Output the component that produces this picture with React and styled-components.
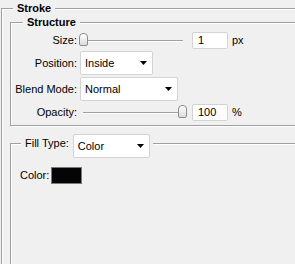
import React from "react";
import styled, { createGlobalStyle } from "styled-components";

const GlobalStyle = createGlobalStyle`
  html, body { margin: 0; padding: 0; background: #f0f0f0; }
  body {
    width: 295px; height: 264px; overflow: hidden;
    font-family: "Liberation Sans", Arial, sans-serif;
    font-size: 11px; color: #000;
  }
`;

const Panel = styled.div`
  box-sizing: border-box;
  width: 295px;
  height: 264px;
  overflow: hidden;
  padding: 2px 0 0 1px;
`;

const Group = styled.fieldset`
  margin: ${(p) => p.$margin || "0"};
  min-width: 0;
  border: 1px solid #a0a0a0;
  box-shadow: inset 1px 1px 0 #fff, 1px 1px 0 #fff;
  padding: ${(p) => p.$pad};
  width: ${(p) => p.$width || "auto"};
  min-height: ${(p) => p.$minH || "0"};
  box-sizing: border-box;
`;

const Legend = styled.legend`
  margin-left: ${(p) => p.$ml}px;
  padding: ${(p) => p.$pad || "0 4px"};
  background: #f0f0f0;
  font-weight: ${(p) => (p.$bold ? "bold" : "normal")};
  line-height: 13px;
`;

const LegendInner = styled.span`
  display: flex;
  align-items: flex-start;
  gap: 4px;
`;

const LegendLabel = styled.span`
  margin-top: 9px;
  line-height: 13px;
`;

const Form = styled.div`
  display: grid;
  grid-template-columns: 66px 1fr;
  grid-template-rows: 18px 24px 24px 18px;
  column-gap: 3px;
  row-gap: 2px;
`;

const Label = styled.div`
  display: flex;
  align-items: center;
  justify-content: flex-end;
  white-space: nowrap;
`;

const Controls = styled.div`
  display: flex;
  align-items: center;
  gap: 4px;
`;

const Slider = styled.div`
  position: relative;
  flex: none;
  width: 108px;
  height: 18px;
  margin-left: -1px;
`;

const Track = styled.div`
  position: absolute;
  left: 4px;
  right: 4px;
  top: 9px;
  height: 1px;
  background: #a0a0a0;
  box-shadow: 0 1px 0 #fff;
`;

const Thumb = styled.div`
  position: absolute;
  top: 2px;
  width: 9px;
  height: 13px;
  box-sizing: border-box;
  border: 1px solid #8c8c8c;
  border-radius: 4px 4px 2px 2px;
  background: linear-gradient(#ffffff, #dcdcdc);
`;

const NumInput = styled.div`
  box-sizing: border-box;
  width: 36px;
  height: 17px;
  margin-left: 1px;
  padding-left: 5px;
  display: flex;
  align-items: center;
  background: #fff;
  border: 1px solid #d3d3d3;
  border-radius: 2px;
`;

const Unit = styled.span``;

const Dropdown = styled.div`
  box-sizing: border-box;
  width: ${(p) => p.$w}px;
  height: 24px;
  margin-top: ${(p) => p.$mt || 0}px;
  display: flex;
  align-items: center;
  justify-content: space-between;
  padding: 0 5px 0 4px;
  background: #fff;
  border: 1px solid #d3d3d3;
  border-radius: 2px;
  font-weight: normal;
`;

const ColorRow = styled.div`
  display: flex;
  align-items: center;
  gap: 2px;
  height: 18px;
`;

const Swatch = styled.div`
  box-sizing: border-box;
  width: 31px;
  height: 17px;
  background: #050505;
  border: 1px solid #7a7a7a;
`;

const Arrow = () => (
  <svg width="7" height="4" viewBox="0 0 7 4">
    <polygon points="0,0 7,0 3.5,4" fill="#000" />
  </svg>
);

const SLIDER_RANGE = 99;

const SliderCtl = ({ value, min, max }) => (
  <Slider>
    <Track />
    <Thumb style={{ left: ((value - min) / (max - min)) * SLIDER_RANGE }} />
  </Slider>
);

export default function App() {
  return (
    <>
      <GlobalStyle />
      <Panel>
        <Group $width="360px" $minH="300px" $pad="1px 0 0 8px">
          <Legend $bold $ml={3}>Stroke</Legend>
          <Group $pad="2px 0 4px 0">
            <Legend $bold $ml={12}>Structure</Legend>
            <Form>
              <Label>Size:</Label>
              <Controls>
                <SliderCtl value={1} min={1} max={250} />
                <NumInput>1</NumInput>
                <Unit>px</Unit>
              </Controls>
              <Label>Position:</Label>
              <Controls>
                <Dropdown $w={73}>
                  Inside
                  <Arrow />
                </Dropdown>
              </Controls>
              <Label>Blend Mode:</Label>
              <Controls>
                <Dropdown $w={98}>
                  Normal
                  <Arrow />
                </Dropdown>
              </Controls>
              <Label>Opacity:</Label>
              <Controls>
                <SliderCtl value={100} min={0} max={100} />
                <NumInput>100</NumInput>
                <Unit>%</Unit>
              </Controls>
            </Form>
          </Group>
          <Group $margin="2px 0 0 0" $pad="8px 0 0 9px" $minH="200px">
            <Legend $ml={1} $pad="0 3px 0 4px">
              <LegendInner>
                <LegendLabel>Fill Type:</LegendLabel>
                <Dropdown $w={77} $mt={6}>
                  Color
                  <Arrow />
                </Dropdown>
              </LegendInner>
            </Legend>
            <ColorRow>
              Color:
              <Swatch />
            </ColorRow>
          </Group>
        </Group>
      </Panel>
    </>
  );
}
